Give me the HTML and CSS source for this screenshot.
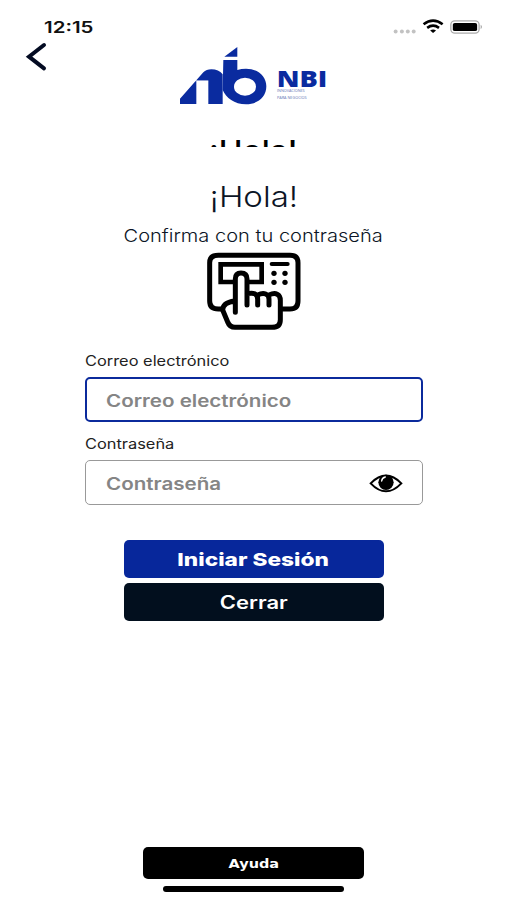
FILE: index.html
```html
<!DOCTYPE html>
<html lang="es">
<head>
<meta charset="utf-8">
<title>NBI</title>
<link rel="stylesheet" href="styles.css">
</head>
<body>
<header class="header">
  <div class="status">
    <span class="time t">12:15</span>
    <svg class="status-icons" viewBox="30 30 300 70">
      <g fill="#c2c2c2"><circle cx="45" cy="80" r="6"/><circle cx="64" cy="80" r="6"/><circle cx="82" cy="80" r="6"/><circle cx="100" cy="80" r="6"/></g>
      <g fill="none" stroke="#000" stroke-width="8"><path d="M130 58Q159 36 188 58"/><path d="M141 69Q159 56 177 69"/></g>
      <path d="M150 77Q159 71 168 77L159 85Z"/>
      <rect x="213" y="48" width="86" height="37" rx="12" fill="#fff" stroke="#aaa" stroke-width="4"/>
      <rect x="219" y="54" width="74" height="25" rx="6"/>
      <path d="M304 60Q310 66 304 73Z" fill="#888"/>
    </svg>
  </div>
  <div class="brand-row">
    <svg class="back" viewBox="75 123 72 93"><path d="M132 135L87 170L132 205" fill="none" stroke="#030b22" stroke-width="12" stroke-linecap="round" stroke-linejoin="miter"/></svg>
    <svg class="logo" viewBox="24 12 456 186">
      <g fill="#0a2b9f">
        <path d="M163 50L202 21V50Z"/>
        <path d="M30 176L100 97Q109 88 124 88Q146 88 158 103V192H115V123H79V192H30Z"/>
        <path d="M160 60H202V90Q214 86 228 86C264 86 289 108 289 139C289 171 263 193 228 193C193 193 168 173 158 150Z"/>
      </g>
      <ellipse cx="225" cy="140" rx="33" ry="27" fill="#fff"/>
      <path d="M72 122H115" fill="none" stroke="#fff" stroke-width="2"/>
      <text class="logo-name" x="320" y="142" textLength="152" lengthAdjust="spacingAndGlyphs">NBI</text>
      <text class="logo-tag" x="321" y="157" textLength="83" lengthAdjust="spacingAndGlyphs">INNOVACIONES</text>
      <text class="logo-tag" x="321" y="177" textLength="89" lengthAdjust="spacingAndGlyphs">PARA NEGOCIOS</text>
    </svg>
  </div>
  <div class="clipped"><span class="t hola">¡Hola!</span></div>
</header>
<main class="main">
  <h1 class="title"><span class="t hola">¡Hola!</span></h1>
  <p class="subtitle"><span class="t">Confirma con tu contraseña</span></p>
  <svg class="device" viewBox="288 96 288 240" fill="none" stroke="#000" stroke-width="15" stroke-linecap="round" stroke-linejoin="round">
    <path d="M333 267H325Q299 267 299 243V128Q299 106 325 106H540Q564 106 564 128V243Q564 267 540 267H518"/>
    <path d="M372 186H332V133H455V186H418" stroke-linejoin="miter" stroke-width="14"/>
    <path d="M485 132H533" stroke-width="12"/>
    <path d="M376 277V177Q376 159 393 159Q411 159 411 177V255M411 221C430 217 443 220 443 238V255M443 225C462 216 477 222 477 238V255M477 225C497 216 511 222 511 241V299Q511 322 486 322H375Q359 322 353 306L338 270Q338 248 374 243"/>
    <g fill="#000" stroke="none"><circle cx="492" cy="160" r="8"/><circle cx="525" cy="160" r="8"/><circle cx="492" cy="187" r="8"/><circle cx="525" cy="187" r="8"/></g>
  </svg>
  <form class="form">
    <label class="label" for="mail"><span class="t">Correo electrónico</span></label>
    <div class="field active" id="mail"><span class="t">Correo electrónico</span></div>
    <label class="label second" for="pass"><span class="t">Contraseña</span></label>
    <div class="field" id="pass"><span class="t">Contraseña</span>
      <svg class="eye" viewBox="87 309 102 63"><path d="M92 340Q138 294 184 340Q138 388 92 340Z" fill="#fff" stroke="#000" stroke-width="6"/><circle cx="138" cy="337" r="23"/><path d="M125 333Q126 323 136 321" fill="none" stroke="#fff" stroke-width="4" stroke-linecap="round"/></svg>
    </div>
  </form>
  <div class="actions">
    <button class="btn primary"><span class="t">Iniciar Sesión</span></button>
    <button class="btn dark"><span class="t">Cerrar</span></button>
  </div>
</main>
<footer class="footer">
  <button class="btn help"><span class="t">Ayuda</span></button>
  <div class="home-bar"></div>
</footer>
</body>
</html>
```
FILE: styles.css
```css
* { box-sizing: border-box; }
body { margin: 0; width: 507px; height: 900px; display: flex; flex-direction: column; overflow: hidden; background: #fff; font-family: Inter, "Liberation Sans", sans-serif; color: #0b1425; }
.t { display: inline-block; white-space: nowrap; }
.header { height: 147px; overflow: hidden; flex: none; }
.status { height: 43px; display: flex; justify-content: space-between; padding: 15px 24px 0 44px; }
.time { font-size: 15.5px; line-height: 25px; height: 25px; font-weight: 600; color: #111; transform: scaleX(1.32); transform-origin: left; }
.status-icons { width: 100px; height: 23px; margin-right: -7px; }
.brand-row { height: 63px; display: flex; padding-left: 25px; }
.back { width: 24px; height: 31px; margin-top: -2px; }
.logo { width: 152px; height: 62px; margin: 1px 0 0 129px; }
.logo-name { font: 800 69px "Open Sans", sans-serif; fill: #0a2b9f; }
.logo-tag { font: 9px "Open Sans", sans-serif; fill: #6373b5; }
.clipped { display: flex; justify-content: center; padding-top: 25px; color: #000; line-height: 40px; }
.hola { font-size: 29px; font-weight: 300; transform: scaleX(1.14); }
.clipped .hola { font-weight: 500; transform: scaleX(1.1); }
.main { flex: 1; display: flex; flex-direction: column; align-items: center; }
.title { margin: 32px 0 0; height: 36px; line-height: 36px; font-size: 29px; }
.subtitle { margin: 10px 0 0; height: 22px; line-height: 22px; font-size: 17.5px; font-weight: 300; }
.subtitle .t { transform: scaleX(1.145); }
.device { width: 96px; height: 80px; margin-top: 5px; }
.form { width: 338px; margin-top: 19px; display: flex; flex-direction: column; }
.label { height: 20px; line-height: 20px; font-size: 14px; color: #222; }
.label .t, .field .t { transform: scaleX(1.17); transform-origin: left; }
.field .t { transform: scaleX(1.21); }
.second { margin-top: 12px; }
.field { height: 45px; margin-top: 6px; border: 1.5px solid #999; border-radius: 5px; display: flex; align-items: center; justify-content: space-between; padding: 2px 19px 0 20px; font-size: 17px; font-weight: 600; color: #858585; }
.active { border: 2px solid #0b2a9c; padding-left: 19px; }
.eye { width: 34px; height: 21px; }
.actions { display: flex; flex-direction: column; gap: 5px; margin-top: 35px; }
.btn { display: flex; align-items: center; justify-content: center; border: 0; padding: 0; border-radius: 5px; color: #fff; font-family: inherit; }
.primary, .dark { width: 260px; height: 38px; font-size: 18px; }
.primary { background: #07279b; font-weight: 800; }
.dark { background: #020f1e; font-weight: 600; }
.primary .t { transform: scaleX(1.26); }
.dark .t { transform: scaleX(1.22); }
.help .t { transform: scaleX(1.16); }
.footer { height: 53px; display: flex; flex-direction: column; align-items: center; }
.help { width: 221px; height: 32px; background: #000; font: 700 12.5px "DejaVu Sans", sans-serif; }
.home-bar { width: 181px; height: 6px; margin-top: 7px; border-radius: 3px; background: #000; }
```
